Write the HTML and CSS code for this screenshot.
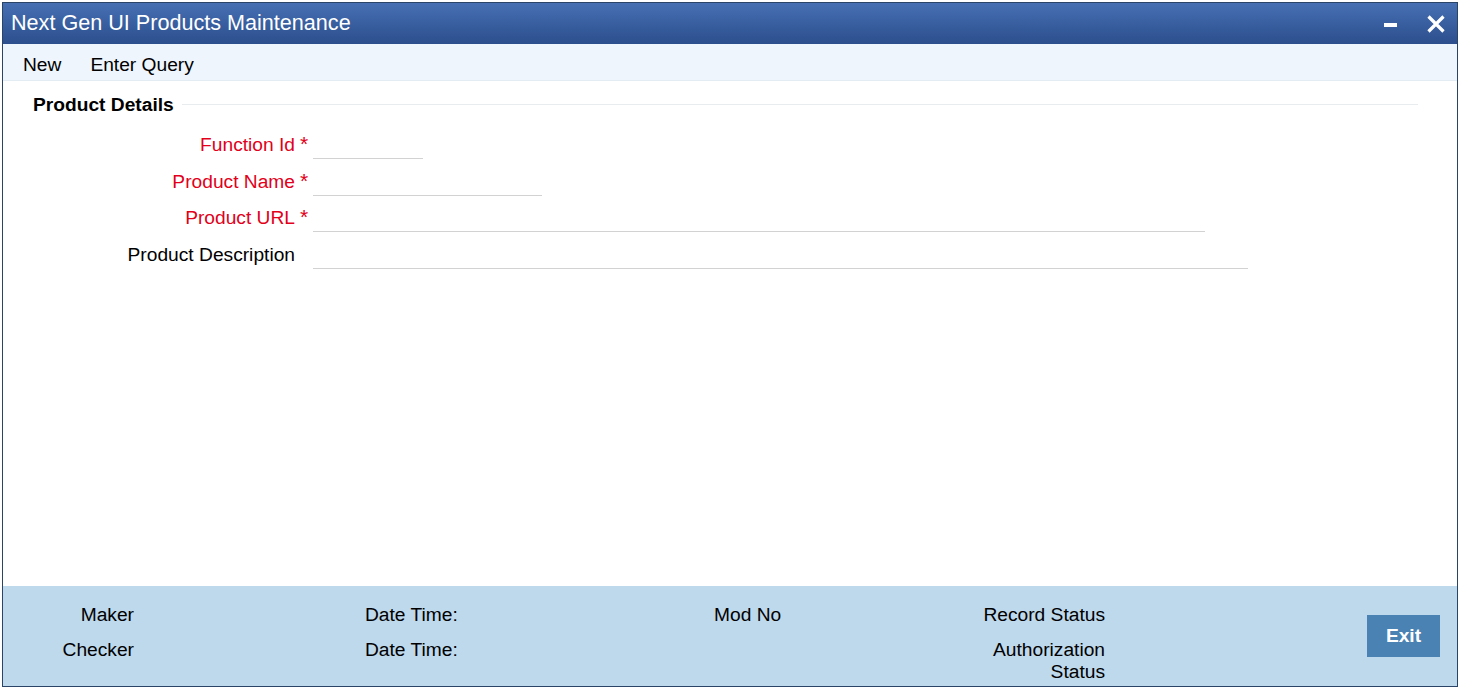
FILE: index.html
```html
<!DOCTYPE html>
<html lang="en">
<head>
  <meta charset="UTF-8">
  <meta name="viewport" content="width=device-width, initial-scale=1.0">
  <title>Next Gen UI Products Maintenance</title>
  <link rel="stylesheet" href="styles.css">
</head>
<body>
  <div class="window">
    <header class="title-bar">
      <h1 class="title">Next Gen UI Products Maintenance</h1>
      <div class="window-actions">
        <button class="win-btn" title="Minimize">
          <svg width="14" height="14" viewBox="0 0 14 14"><rect x="0" y="6" width="13" height="4" fill="#fff"/></svg>
        </button>
        <button class="win-btn" title="Close">
          <svg width="18" height="18" viewBox="0 0 18 18"><path d="M1.5 1.5 L16.5 16.5 M16.5 1.5 L1.5 16.5" stroke="#fff" stroke-width="3.2" fill="none"/></svg>
        </button>
      </div>
    </header>

    <nav class="toolbar">
      <a class="tool-item">New</a>
      <a class="tool-item">Enter Query</a>
    </nav>

    <main class="main">
      <h2 class="section-title">Product Details</h2>

      <div class="form">
        <div class="form-row">
          <label class="label required">Function Id</label>
          <span class="star">*</span>
          <input type="text" class="input-field w-id">
        </div>
        <div class="form-row">
          <label class="label required">Product Name</label>
          <span class="star">*</span>
          <input type="text" class="input-field w-name">
        </div>
        <div class="form-row">
          <label class="label required">Product URL</label>
          <span class="star">*</span>
          <input type="text" class="input-field w-url">
        </div>
        <div class="form-row">
          <label class="label">Product Description</label>
          <span class="star"></span>
          <input type="text" class="input-field w-desc">
        </div>
      </div>
    </main>

    <footer class="footer">
      <div class="audit">
        <span class="audit-label right">Maker</span>
        <span class="audit-value"></span>
        <span class="audit-label">Date Time:</span>
        <span class="audit-label">Mod No</span>
        <span class="audit-label right">Record Status</span>

        <span class="audit-label right">Checker</span>
        <span class="audit-value"></span>
        <span class="audit-label">Date Time:</span>
        <span class="audit-value"></span>
        <span class="audit-label right">Authorization Status</span>
      </div>
      <button class="exit-button">Exit</button>
    </footer>
  </div>
</body>
</html>
```

FILE: styles.css
```css
:root {
  --border-color: #2a4468;
  --toolbar-color: #eef5fc;
  --footer-color: #bed8ec;
  --required-color: #e2001a;
  --text-color: #000000;
  --button-color: #4a82b3;
}

* {
  box-sizing: border-box;
}

body {
  margin: 0;
  padding: 0;
  font-family: "Liberation Sans", Arial, sans-serif;
  font-size: 19.2px;
  color: var(--text-color);
  background: #ffffff;
}

.window {
  margin: 2px 0 0 2px;
  width: 1456px;
  height: 685px;
  border: 1px solid var(--border-color);
  display: flex;
  flex-direction: column;
  background: #ffffff;
}

.title-bar {
  height: 41px;
  flex: none;
  display: flex;
  align-items: center;
  justify-content: space-between;
  padding: 0 12px 0 8px;
  background: linear-gradient(#4670b3, #2c4e8d);
}

.title {
  margin: 0 0 2px;
  font-size: 21.6px;
  font-weight: normal;
  color: #ffffff;
}

.window-actions {
  display: flex;
  align-items: center;
  gap: 29px;
}

.win-btn {
  border: none;
  background: transparent;
  padding: 0;
  cursor: pointer;
  display: flex;
}

.toolbar {
  height: 37px;
  flex: none;
  display: flex;
  align-items: center;
  gap: 29px;
  padding: 5px 20px 0;
  background: var(--toolbar-color);
  border-bottom: 1px solid #e3ebf3;
}

.tool-item {
  cursor: pointer;
}

.main {
  flex: 1;
  padding: 12px 39px 0 30px;
}

.section-title {
  margin: 0;
  font-size: 19.2px;
  line-height: 23px;
  display: flex;
  align-items: center;
  gap: 8px;
}

.section-title::after {
  content: "";
  flex: 1;
  height: 1px;
  background: #e8ecef;
}

.form {
  margin-top: 11px;
}

.form-row {
  height: 36.5px;
  display: flex;
  align-items: center;
}

.label {
  width: 262px;
  text-align: right;
}

.label.required {
  color: var(--required-color);
}

.star {
  width: 18px;
  padding-left: 5px;
  font-size: 21px;
  color: var(--required-color);
  align-self: flex-start;
  margin-top: 5px;
}

.input-field {
  height: 28px;
  border: none;
  border-bottom: 1px solid #d2d2d2;
  outline: none;
  background: transparent;
  font: inherit;
  padding: 0 4px;
}

.w-id { width: 110px; }
.w-name { width: 229px; }
.w-url { width: 892px; }
.w-desc { width: 935px; }

.footer {
  height: 100px;
  flex: none;
  display: flex;
  align-items: flex-start;
  padding: 18px 17px 0 0;
  background: var(--footer-color);
}

.audit {
  display: grid;
  grid-template-columns: 131px 231px 349px 266px 125px;
  row-gap: 13px;
  line-height: 22px;
}

.audit-label.right {
  text-align: right;
}

.exit-button {
  margin-left: auto;
  margin-top: 11px;
  width: 73px;
  height: 42px;
  border: none;
  background: var(--button-color);
  color: #ffffff;
  font: inherit;
  font-weight: bold;
  cursor: pointer;
}
```
